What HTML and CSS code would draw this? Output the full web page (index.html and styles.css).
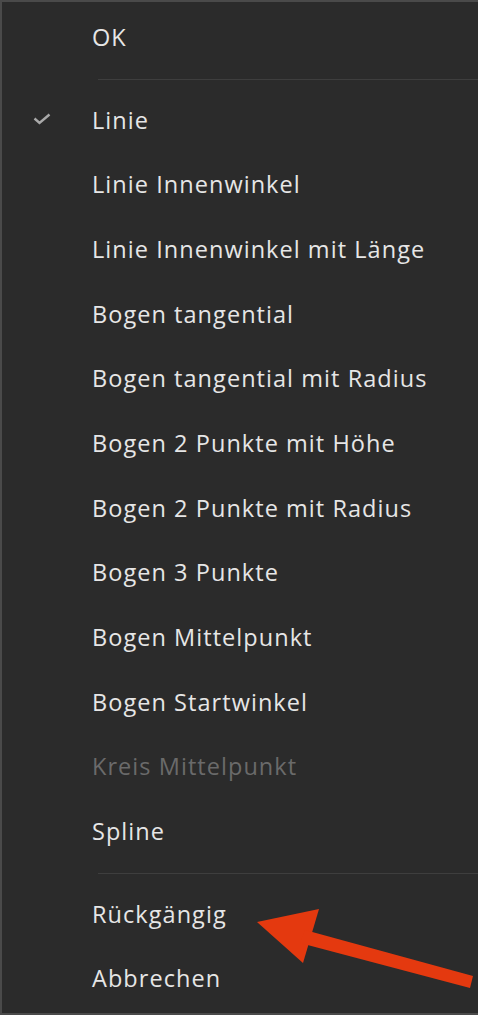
FILE: index.html
```html
<!DOCTYPE html>
<html lang="de">
<head>
<meta charset="utf-8">
<title>Kontextmenü</title>
<link rel="stylesheet" href="styles.css">
</head>
<body>
<div class="menu">
  <div class="item">OK</div>
  <div class="sep"></div>
  <div class="item checked">
    <svg class="check" viewBox="0 0 18 12" width="18" height="12"><path d="M1.5 5.5 L6.5 10 L16.5 1.5" fill="none" stroke="#a9a9a9" stroke-width="2.4"/></svg>
    Linie
  </div>
  <div class="item">Linie Innenwinkel</div>
  <div class="item">Linie Innenwinkel mit Länge</div>
  <div class="item">Bogen tangential</div>
  <div class="item">Bogen tangential mit Radius</div>
  <div class="item">Bogen 2 Punkte mit Höhe</div>
  <div class="item">Bogen 2 Punkte mit Radius</div>
  <div class="item">Bogen 3 Punkte</div>
  <div class="item">Bogen Mittelpunkt</div>
  <div class="item">Bogen Startwinkel</div>
  <div class="item disabled">Kreis Mittelpunkt</div>
  <div class="item">Spline</div>
  <div class="sep"></div>
  <div class="item">Rückgängig</div>
  <div class="item">Abbrechen</div>
  <svg class="arrow" viewBox="0 0 478 1015" width="478" height="1015">
    <polygon points="257,922 319,909 303,963" fill="#e4390f"/>
    <polygon points="305,930 473,976 470,988 300,943" fill="#e4390f"/>
  </svg>
</div>
</body>
</html>
```
FILE: styles.css
```css
html, body {
  margin: 0;
  padding: 0;
  background: #2b2b2b;
}
.menu {
  position: relative;
  box-sizing: border-box;
  width: 478px;
  height: 1015px;
  background: #2b2b2b;
  border-top: 2px solid #4a4a4a;
  border-left: 2px solid #4a4a4a;
  border-bottom: 2px solid #4a4a4a;
  padding-top: 2px;
  font-family: "Open Sans", "Noto Sans", sans-serif;
  font-size: 23.5px;
  font-weight: 400;
  letter-spacing: 1.05px;
  color: #e6e6e6;
}
.item {
  position: relative;
  height: 64.7px;
  display: flex;
  align-items: center;
  padding-left: 90px;
  padding-top: 1px;
  box-sizing: border-box;
  white-space: nowrap;
}
.item.disabled {
  color: #6a6a6a;
}
.check {
  position: absolute;
  left: 31px;
  top: 26px;
}
.sep {
  height: 1px;
  margin: 10px 0 7px 96px;
  background: #3e3e3e;
}
.arrow {
  position: absolute;
  left: -2px;
  top: -2px;
  pointer-events: none;
}
```
